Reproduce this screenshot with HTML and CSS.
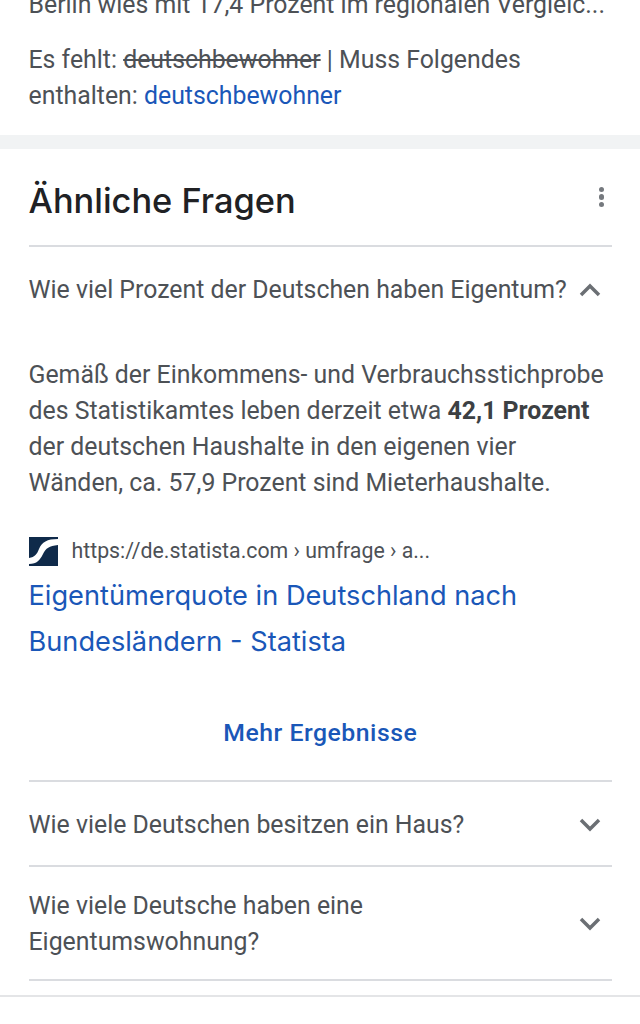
FILE: index.html
```html
<!DOCTYPE html>
<html>
  <head>
    <meta charset="utf-8" />
    <title>Ähnliche Fragen</title>

    <link rel="stylesheet" href="styles.css">
  </head>

  <body>
    <div class="result-card">
      <p class="snippet">Berlin wies mit 17,4 Prozent im regionalen Vergleic...</p>
      <p class="missing">Es fehlt: <s>deutschbewohner</s> | Muss Folgendes enthalten: <a href="#">deutschbewohner</a></p>
    </div>

    <div class="questions-card">
      <div class="card-title">
        <h2>Ähnliche Fragen</h2>
        <div class="more-icon"><span></span><span></span><span></span></div>
      </div>

      <div class="question open">
        <div class="question-head">
          <p>Wie viel Prozent der Deutschen haben Eigentum?</p>
          <svg class="chevron" viewBox="0 0 24 14"><path d="M3 12 L12 3 L21 12" /></svg>
        </div>
        <p class="answer">Gemäß der Einkommens- und Verbrauchsstichprobe des Statistikamtes leben derzeit etwa <b>42,1 Prozent</b> der deutschen Haushalte in den eigenen vier Wänden, ca. 57,9 Prozent sind Mieterhaushalte.</p>
        <div class="source">
          <svg class="favicon" viewBox="0 0 29 29">
            <rect width="29" height="29" fill="#0f2a4a" />
            <path d="M0 27 C8 27 11 23 14 17 C17 11 20 9 29 8 L29 2 C18 2 13 5 10 12 C8 17 6 20 0 21 Z" fill="#fff" />
          </svg>
          <span>https://de.statista.com › umfrage › a...</span>
        </div>
        <a class="source-title" href="#">Eigentümerquote in Deutschland nach Bundesländern - Statista</a>
        <a class="more-results" href="#">Mehr Ergebnisse</a>
      </div>

      <div class="question">
        <div class="question-head">
          <p>Wie viele Deutschen besitzen ein Haus?</p>
          <svg class="chevron" viewBox="0 0 24 14"><path d="M3 2 L12 11 L21 2" /></svg>
        </div>
      </div>

      <div class="question">
        <div class="question-head tight">
          <p>Wie viele Deutsche haben eine Eigentumswohnung?</p>
          <svg class="chevron" viewBox="0 0 24 14"><path d="M3 2 L12 11 L21 2" /></svg>
        </div>
      </div>
    </div>
  </body>
</html>
```

FILE: styles.css
```css
* {
  margin: 0;
  padding: 0;
  box-sizing: border-box;
}
html,
body {
  height: 1024px;
  overflow: hidden;
}
body {
  background: #fff;
  font-family: Roboto, "Noto Sans", sans-serif;
  font-size: 24.85px;
  line-height: 36px;
  color: #4d5156;
}
a {
  color: #1a57b8;
  text-decoration: none;
}
.result-card {
  margin-top: -13px;
  padding: 0 28.5px 21px;
  border-bottom: 14px solid #f1f3f4;
}
.snippet {
  white-space: nowrap;
  margin-bottom: 19px;
}
.questions-card {
  padding: 0 28px 14px 28.5px;
  border-bottom: 2px solid #e4e5e7;
}
.card-title {
  display: flex;
  justify-content: space-between;
  align-items: center;
  height: 98px;
  border-bottom: 2px solid #dadce0;
}
.card-title h2 {
  font-family: Inter, Roboto, sans-serif;
  font-size: 34.4px;
  font-weight: 500;
  line-height: 44px;
  margin-top: 7px;
  color: #202124;
}
.more-icon {
  display: flex;
  flex-direction: column;
  gap: 2px;
  margin-right: 8px;
}
.more-icon span {
  width: 5.5px;
  height: 5.5px;
  border-radius: 50%;
  background: #75797e;
}
.question {
  border-bottom: 2px solid #dadce0;
}
.question-head {
  display: flex;
  justify-content: space-between;
  align-items: center;
  padding: 25px 10px 22px 0;
}
.question-head.tight {
  padding-top: 21px;
  padding-bottom: 19px;
}
.question-head p {
  max-width: 540px;
}
.chevron {
  width: 24px;
  height: 14px;
  flex-shrink: 0;
}
.chevron path {
  fill: none;
  stroke: #6b6f74;
  stroke-width: 3.5;
}
.answer {
  margin-top: 27px;
}
.answer b {
  color: #3c4043;
}
.source {
  display: flex;
  align-items: center;
  gap: 14px;
  margin-top: 32px;
  font-size: 21.3px;
}
.favicon {
  width: 29px;
  height: 29px;
}
.source-title {
  display: block;
  margin-top: 4px;
  font-family: Inter, Roboto, sans-serif;
  font-size: 27.2px;
  line-height: 46px;
}
.more-results {
  display: block;
  margin-top: 50px;
  padding-bottom: 29px;
  text-align: center;
  font-weight: 500;
  font-size: 24.8px;
  letter-spacing: 0.5px;
}
```
